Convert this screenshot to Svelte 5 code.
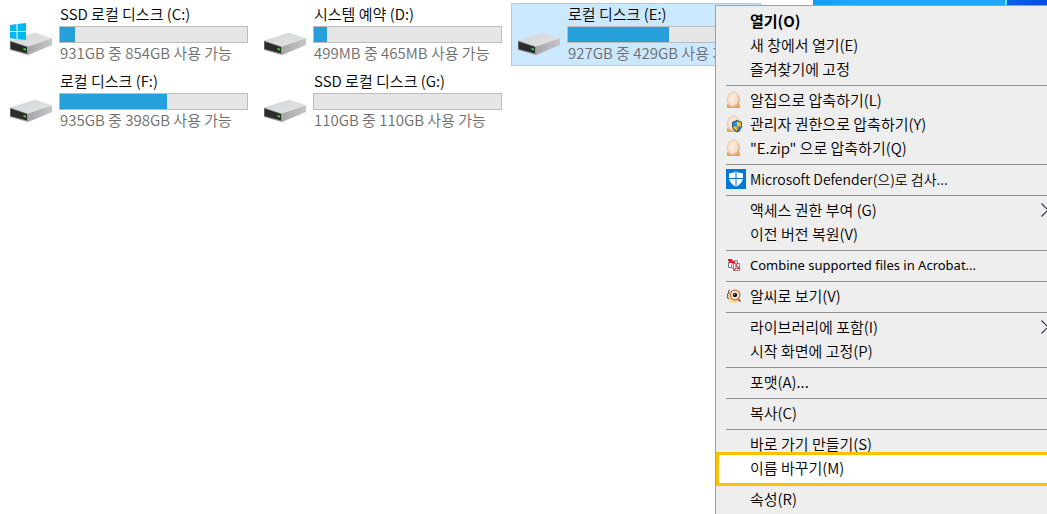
<script>
  const drives = [
    { name: 'SSD 로컬 디스크 (C:)', info: '931GB 중 854GB 사용 가능', used: 8, system: true },
    { name: '시스템 예약 (D:)', info: '499MB 중 465MB 사용 가능', used: 7 },
    { name: '로컬 디스크 (E:)', info: '927GB 중 429GB 사용 가능', used: 54, selected: true },
    { name: '로컬 디스크 (F:)', info: '935GB 중 398GB 사용 가능', used: 57 },
    { name: 'SSD 로컬 디스크 (G:)', info: '110GB 중 110GB 사용 가능', used: 0 }
  ];
  const groups = [
    [{ text: '열기(O)', bold: true }, { text: '새 창에서 열기(E)' }, { text: '즐겨찾기에 고정' }],
    [
      { text: '알집으로 압축하기(L)', icon: 'egg' },
      { text: '관리자 권한으로 압축하기(Y)', icon: 'eggshield' },
      { text: '"E.zip" 으로 압축하기(Q)', icon: 'egg' }
    ],
    [{ text: 'Microsoft Defender(으)로 검사...', icon: 'defender', mixed: true }],
    [{ text: '액세스 권한 부여 (G)', sub: true }, { text: '이전 버전 복원(V)' }],
    [{ text: 'Combine supported files in Acrobat...', icon: 'acrobat', latin: true }],
    [{ text: '알씨로 보기(V)', icon: 'alsee' }],
    [{ text: '라이브러리에 포함(I)', sub: true }, { text: '시작 화면에 고정(P)' }],
    [{ text: '포맷(A)...' }],
    [{ text: '복사(C)' }],
    [{ text: '바로 가기 만들기(S)' }, { text: '이름 바꾸기(M)', marked: true }],
    [{ text: '속성(R)' }]
  ];
</script>

<svg class="defs" aria-hidden="true">
  <defs>
    <linearGradient id="top" x1="0" y1="0" x2="1" y2="1">
      <stop offset="0" stop-color="#d2d3d6" /><stop offset="1" stop-color="#e6e6e8" />
    </linearGradient>
    <linearGradient id="side" x1="0" y1="0" x2="1" y2="0">
      <stop offset="0" stop-color="#a6a6a8" /><stop offset="1" stop-color="#c6c6c8" />
    </linearGradient>
    <radialGradient id="shell" cx=".4" cy=".4" r=".65">
      <stop offset="0" stop-color="#fff0df" /><stop offset=".7" stop-color="#f6dcc3" /><stop offset="1" stop-color="#bd9270" />
    </radialGradient>
  </defs>
</svg>

<div class="desktop">
  <div class="wallpaper"></div>
  <main class="drives">
    {#each drives as d}
      <button class="drive" class:selected={d.selected}>
        <svg class="disk" width="48" height="48" viewBox="0 0 48 48" aria-hidden="true">
          <path d="M2 30.500L26 23Q27 22.600 28 23L44 28.300L20 36.500Z" fill="url(#top)" />
          <path d="M20 36.500L44 28.300V35L20 45Z" fill="url(#side)" />
          <path d="M2 30.500L20 36.500V45L2 40Z" fill="#98989a" />
          <path d="M2.500 31.500L19 37V43.500L2.500 39Z" fill="#2c2c2c" />
          <path d="M15.500 38L18 38.800V40.600L15.500 39.800Z" fill="#30e43c" />
          {#if d.system}
            <path d="M2 15L8.500 14V21H2ZM9.500 14L18 13V21H9.500ZM2 22H8.500V29L2 28.200ZM9.500 22H18V30L9.500 29Z" fill="#00b9f1" />
          {/if}
        </svg>
        <span class="details">
          <span class="name">{d.name}</span>
          <span class="bar" role="meter" aria-label={d.name} aria-valuenow={d.used} aria-valuemin="0" aria-valuemax="100">
            <span class="fill" style="width: {d.used}%"></span>
          </span>
          <span class="info">{d.info}</span>
        </span>
      </button>
    {/each}
  </main>

  <div class="menu" role="menu">
    {#each groups as group, i}
      {#if i > 0}<hr />{/if}
      {#each group as item}
        <button class="item" class:bold={item.bold} class:mixed={item.mixed} class:latin={item.latin} class:marked={item.marked} role="menuitem">
          <span class="icon">
            {#if item.icon === 'egg' || item.icon === 'eggshield'}
              <svg width="16" height="18" viewBox="0 0 16 18">
                <path d="M1 13L3 14H12L14 13V17H1Z" fill="#f2ad1c" />
                <path d="M7.500 1C11.500 1 13.500 5 13.500 9C13.500 13 11 16.500 7.500 16.500S1.500 13 1.500 9C1.500 5 3.500 1 7.500 1Z" fill="url(#shell)" stroke="#d9b595" stroke-width=".6" />
                {#if item.icon === 'eggshield'}
                  <path d="M11 5L16 7V11.500Q15 15.500 11 17.500Q7 15.500 6 11.500V7Z" fill="#315779" />
                  <path d="M11 6.300V11.500H7V7.800ZM11 11.500H15Q14 15 11 16.300Z" fill="#2490ee" />
                  <path d="M11 6.300L15 7.800V11.500H11ZM7 11.500H11V16.300Q8 15 7 11.500Z" fill="#ffc61e" />
                {/if}
              </svg>
            {:else if item.icon === 'defender'}
              <svg width="20" height="20" viewBox="0 0 20 20">
                <rect width="20" height="20" fill="#0078d7" />
                <path d="M10 2L12 3.500L17 4.500V9.500Q16 15 10 18Q4 15 3 9.500V4.500L8 3.500Z" fill="#fff" />
                <path d="M10 2V18M3 9.500H17" stroke="#0078d7" />
              </svg>
            {:else if item.icon === 'acrobat'}
              <svg width="16" height="14" viewBox="-1 0 16 14">
                <rect x="1" y="1" width="12" height="12" fill="#fff" />
                <path d="M4.500 6.500V9.500H1.500V4M7 6V10H4M7.500 2.500H10.500V5" fill="none" stroke="#777" />
                <path d="M1 1H5L6 3H8V5L9 6L6 7L5 5H2V3H1Z" fill="#e51d2a" />
                <rect x="6.500" y="5.500" width="6" height="7" fill="#fff" stroke="#888" />
                <path d="M7 12Q10 10 9 6Q10 10 13 10.500Q9 9.500 7 12" fill="none" stroke="#e51d2a" />
              </svg>
            {:else if item.icon === 'alsee'}
              <svg width="16" height="16" viewBox="0 0 16 16">
                <path d="M3 10Q2 14 4 15H11Q13 14 13 10Z" fill="#f5dfa4" />
                <path d="M4 2Q1 3 3 5Q0 6 2 8Q0 10 3 11" fill="none" stroke="#4b3932" />
                <path d="M12 11L14.500 13.500" stroke="#744b34" stroke-width="1.500" />
                <circle cx="9" cy="7" r="4.700" fill="#fff" stroke="#e07038" stroke-width="1.600" />
                <circle cx="9" cy="7" r="2.300" fill="#161616" />
                <circle cx="8.300" cy="6.300" r=".6" fill="#fff" />
              </svg>
            {/if}
          </span>
          <span class="text">{item.text}</span>
          {#if item.sub}
            <svg class="arrow" width="6" height="14" viewBox="0 0 6 14" aria-hidden="true">
              <path d="M0.500 0.500L7 7L0.500 13.500" fill="none" stroke="#3d3350" stroke-width="1.200" />
            </svg>
          {/if}
        </button>
      {/each}
    {/each}
  </div>
</div>

<style>
  :global(body) { margin: 0; background: #fff; }
  .desktop {
    position: relative;
    height: 100vh;
    overflow: hidden;
    font-family: "Noto Sans CJK KR", sans-serif;
    font-size: 15px;
    font-weight: 350;
    color: #000;
  }
  .defs { position: absolute; width: 0; height: 0; }
  button { font: inherit; color: inherit; border: 0; background: none; text-align: left; padding: 0; }
  .wallpaper {
    position: absolute;
    top: 0;
    right: 0;
    width: 234px;
    height: 6px;
    background: linear-gradient(90deg, #149cf2, #22a6fb 40px, #22a6fb 192px, #5fe6ff 192px, #5fe6ff 194px, #0860e8 194px, #064fe0);
  }
  .drives {
    display: grid;
    grid-template-columns: repeat(3, 250px);
    gap: 4px;
    padding: 3px;
  }
  .drive {
    display: flex;
    gap: 3px;
    height: 63px;
    padding: 0 3px;
    border: 1px solid transparent;
  }
  .drive.selected { background: #cce8ff; border-color: #99d1ff; }
  .disk { flex: none; margin: 6px 0 0 1px; }
  .details { display: flex; flex-direction: column; width: 189px; white-space: nowrap; }
  .name, .info { line-height: 19px; padding-left: 1px; }
  .name { height: 22px; }
  .info { color: #6d6d6d; }
  .bar {
    display: block;
    box-sizing: border-box;
    height: 17px;
    border: 1px solid #bcbcbc;
    background: #e6e6e6;
  }
  .fill { display: block; height: 100%; background: #26a0da; }
  .menu {
    position: absolute;
    top: 5px;
    left: 715px;
    right: 0;
    min-height: 100vh;
    padding-top: 3px;
    border: 1px solid #a0a0a0;
    border-right: 0;
    background: #eee;
  }
  hr { height: 1px; margin: 4px 0 2px 10px; border: 0; background: #919191; }
  .item {
    position: relative;
    display: flex;
    align-items: center;
    width: 100%;
    height: 24px;
    line-height: 24px;
    white-space: nowrap;
  }
  .icon { display: flex; width: 20px; margin: 0 4px 0 10px; }
  .text { flex: 1; }
  .bold { font-weight: 700; }
  .mixed { font-size: 14px; }
  .latin { font-family: "Noto Sans", sans-serif; font-size: 13px; font-weight: 400; }
  .marked { z-index: 0; }
  .marked::before {
    content: "";
    position: absolute;
    z-index: -1;
    inset: -4px -4px -6px 0;
    border: 3px solid #ffc000;
    background: #fff;
  }
</style>
